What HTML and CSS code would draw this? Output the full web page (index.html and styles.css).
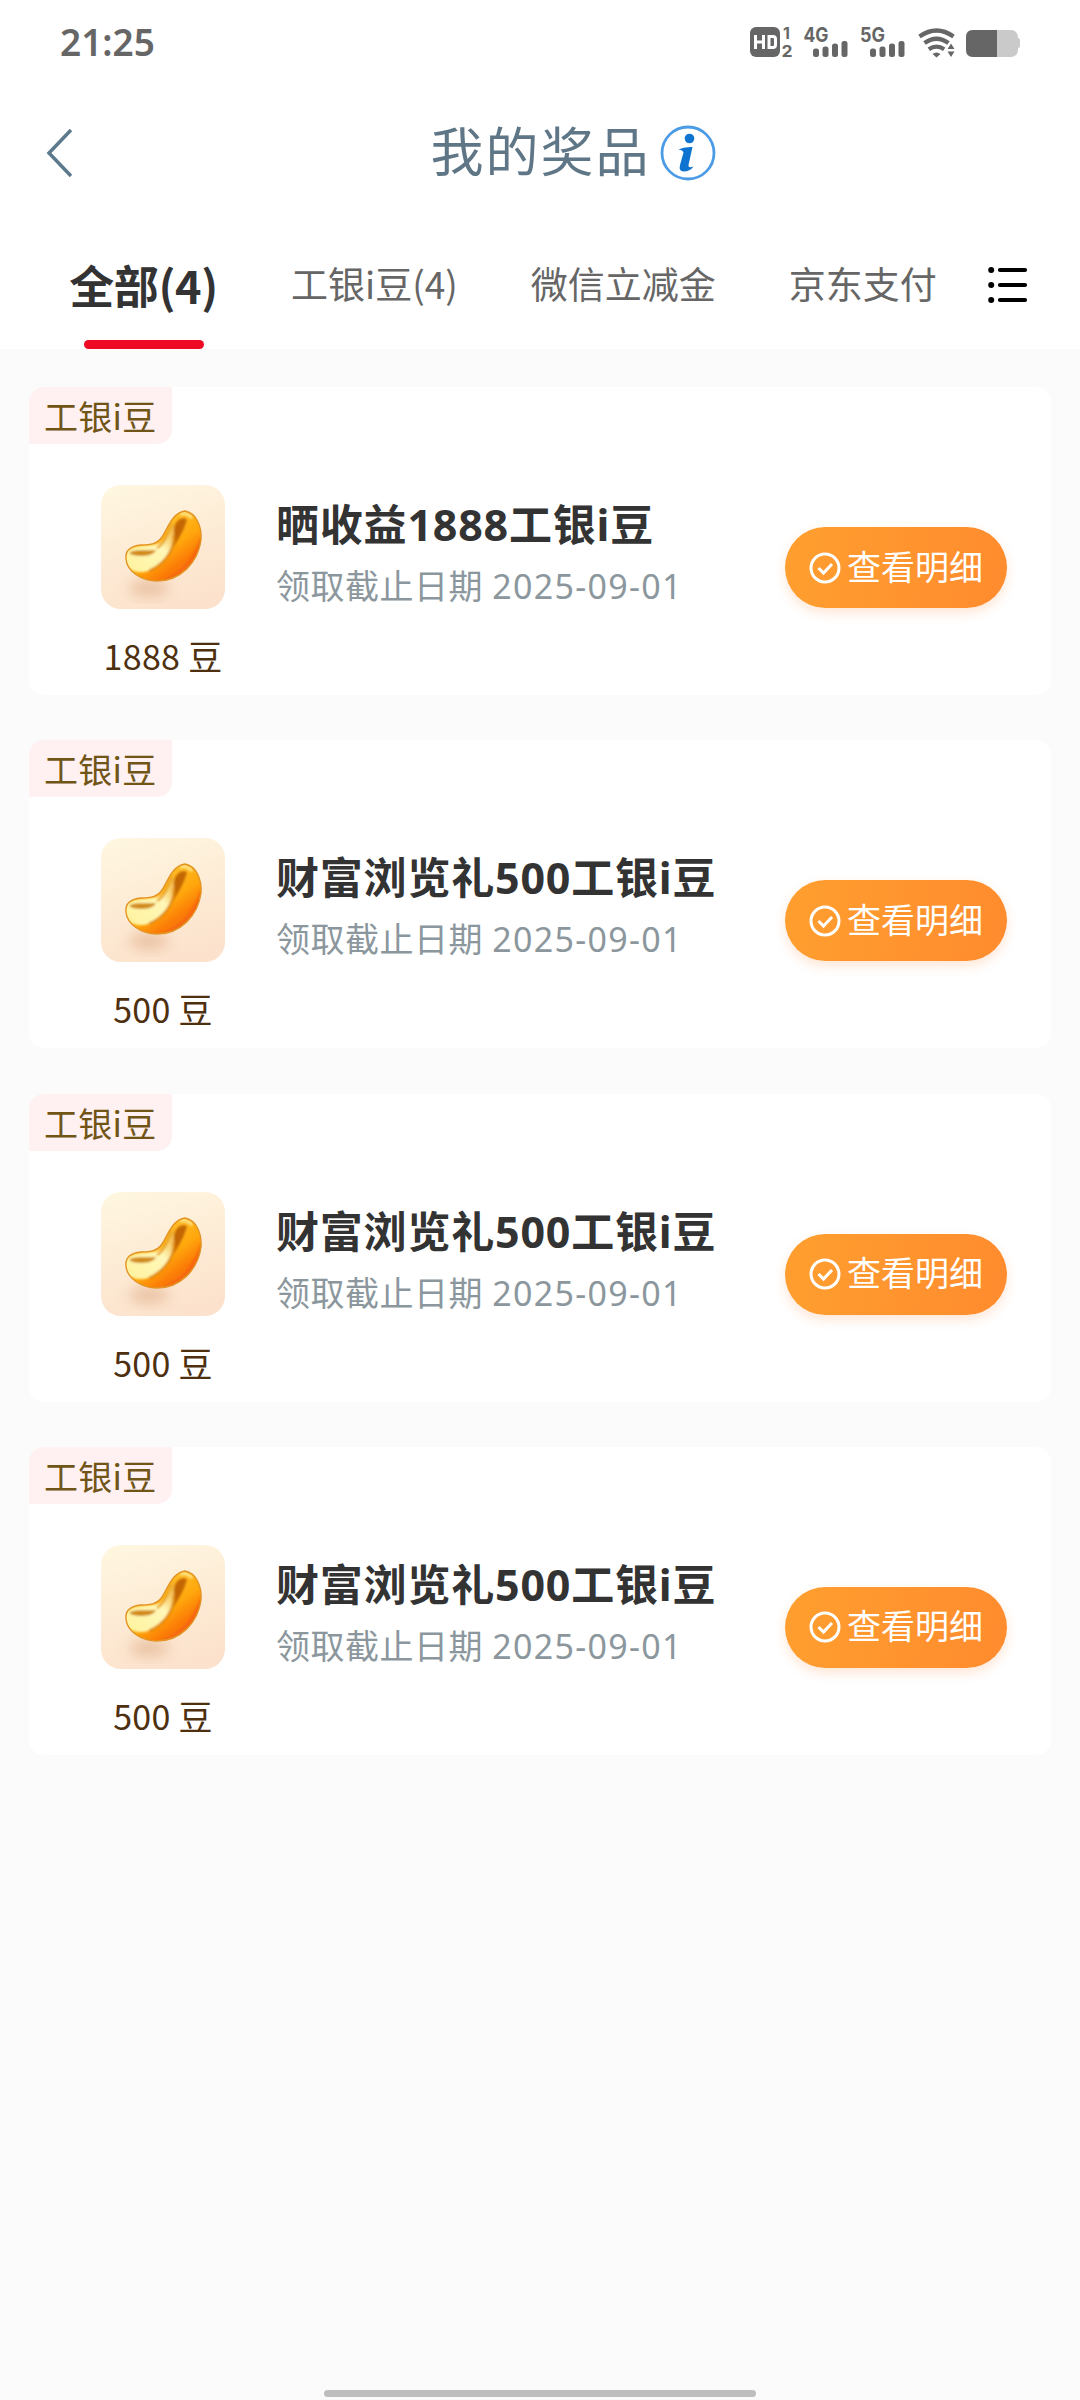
FILE: index.html
```html
<!DOCTYPE html>
<html lang="zh-CN">
<head>
<meta charset="utf-8">
<title>我的奖品</title>
<link rel="stylesheet" href="styles.css">
</head>
<body>
<svg class="defs" width="0" height="0" aria-hidden="true">
  <defs>
    <linearGradient id="tile" x1="0.3" y1="0" x2="0.6" y2="1">
      <stop offset="0" stop-color="#fff6e0"/><stop offset="0.5" stop-color="#fdebd5"/><stop offset="1" stop-color="#fce2cc"/>
    </linearGradient>
    <linearGradient id="body" x1="0.35" y1="0.2" x2="0.85" y2="0.85">
      <stop offset="0" stop-color="#ffc42e"/><stop offset="0.5" stop-color="#ffa70c"/><stop offset="0.78" stop-color="#fb7a06"/><stop offset="1" stop-color="#f39a1c"/>
    </linearGradient>
    <linearGradient id="shine" x1="0" y1="0.8" x2="1" y2="0">
      <stop offset="0" stop-color="#fff3a0"/><stop offset="0.6" stop-color="#fff7b8"/><stop offset="1" stop-color="#f0a01c"/>
    </linearGradient>
    <filter id="soft" x="-50%" y="-50%" width="200%" height="200%"><feGaussianBlur stdDeviation="7"/></filter>
    <filter id="smooth" x="-20%" y="-20%" width="140%" height="140%"><feGaussianBlur stdDeviation="1.1"/></filter>
    <clipPath id="bean-clip"><path d="M84 26C95 28 101 41 100 55C97 78 79 96 56 96C40 96 26 86 25 74C24 65 30 61 40 60C50 60 56 59 61 52C67 43 71 28 84 26Z"/></clipPath>
    <symbol id="bean" viewBox="0 0 124 124">
      <rect width="124" height="124" rx="20" fill="url(#tile)"/>
      <ellipse cx="48" cy="103" rx="20" ry="8" fill="#d59b72" opacity="0.5" filter="url(#soft)"/>
      <g clip-path="url(#bean-clip)">
        <rect x="20" y="20" width="85" height="80" fill="url(#body)"/>
        <g filter="url(#smooth)">
          <path d="M60 95C84 84 95 69 99 52L105 80L80 98Z" fill="#f55f0c" opacity="0.75"/>
          <path d="M22 72C29 57 48 63 59 58C67 50 69 42 72 36C75 50 74 66 60 79C50 89 31 90 24 80Z" fill="url(#shine)"/>
          <path d="M29 67C37 64 47 66 55 65C52 72 37 72 29 69Z" fill="#d18a15"/>
          <path d="M73 48C72 38 79 31 86 34C83 46 77 54 73 62Z" fill="#b85a06" opacity="0.85"/>
          <path d="M73 50C74 66 62 80 48 86" fill="none" stroke="#e08a10" stroke-width="2.500"/>
          <path d="M56 63C64 58 67 48 70 39" fill="none" stroke="#eba51b" stroke-width="2.500"/>
          <path d="M79 29Q86 27 91 33" fill="none" stroke="#ffe487" stroke-width="3"/>
        </g>
      </g>
      <path d="M84 26C95 28 101 41 100 55C97 78 79 96 56 96C40 96 26 86 25 74C24 65 30 61 40 60C50 60 56 59 61 52C67 43 71 28 84 26Z" fill="none" stroke="#e39424" stroke-width="1.400"/>
    </symbol>
    <symbol id="check" viewBox="0 0 32 32">
      <circle cx="16" cy="16" r="14" fill="none" stroke="#fff" stroke-width="3"/>
      <path d="M9.5 16L14.5 21L23 12" fill="none" stroke="#fff" stroke-width="3"/>
    </symbol>
  </defs>
</svg>

<header class="top">
  <div class="status">
    <span class="time">21:25</span>
    <svg class="status-icons" width="272" height="56" viewBox="749 14 272 56" fill="#666">
      <rect x="750" y="27" width="30" height="30" rx="6"/>
      <path d="M755.500 35V49M763.500 35V49M755.500 42H763.500M769 36.500H773Q775.500 36.500 775.500 39V45Q775.500 47.500 773 47.500H769Z" fill="none" stroke="#fff" stroke-width="3"/>
      <text class="sim" x="783" y="39" font-size="16">1</text>
      <text class="sim" x="781.500" y="56.500" font-size="16" textLength="11" lengthAdjust="spacingAndGlyphs">2</text>
      <text class="net" x="803.500" y="42" textLength="25" lengthAdjust="spacingAndGlyphs">4G</text>
      <text class="net" x="860" y="42" textLength="25" lengthAdjust="spacingAndGlyphs">5G</text>
      <g id="bars">
        <rect x="813" y="48.500" width="6" height="8.500" rx="2.500"/><rect x="822.500" y="46.500" width="6" height="10.500" rx="2.500"/>
        <rect x="832" y="43.500" width="6" height="13.500" rx="2.500"/><rect x="841.500" y="41" width="6" height="16" rx="2.500"/>
      </g>
      <use href="#bars" x="57"/>
      <g fill="none" stroke="#666" stroke-width="4.200">
        <path d="M919.500 36.500Q936.500 24.500 953.500 36.500"/><path d="M924.500 43Q936.500 34.500 948.500 43"/><path d="M928.800 49.200Q936.500 44 944.200 49.200"/>
      </g>
      <path d="M932.500 54Q936.500 51 940.500 54L936.500 57.500Z"/>
      <path d="M951 43.500L954.500 49H947.500ZM951 57L954.500 51.500H947.500Z"/>
      <rect x="966" y="30" width="52" height="27" rx="7" fill="#cacaca"/>
      <rect x="1015" y="38" width="5" height="10" rx="2" fill="#cacaca"/>
      <path d="M997 30H973Q966 30 966 37V50Q966 57 973 57H997Z"/>
    </svg>
  </div>
  <div class="nav">
    <svg class="back" width="28" height="50" viewBox="0 0 28 50"><path d="M25 2L3 25L25 48" fill="none" stroke="#5c7a8c" stroke-width="3.500"/></svg>
    <h1 class="title">我的奖品</h1>
    <svg class="info" width="58" height="58" viewBox="0 0 58 58">
      <circle cx="29" cy="29" r="26" fill="none" stroke="#4c9be6" stroke-width="2.800"/>
      <circle cx="30.500" cy="14.500" r="4.800" fill="#0f74d0"/>
      <path d="M19.500 25.500Q25 22.500 33.500 23L29.500 41Q29 44.500 34.500 42.500Q31 47.500 24.500 47.500Q19.500 47 21 41L24.500 28.500Q24 26 19.500 25.500Z" fill="#0f74d0"/>
    </svg>
  </div>
  <nav class="tabs">
    <span class="tab active">全部(4)</span>
    <span class="tab">工银i豆(4)</span>
    <span class="tab">微信立减金</span>
    <span class="tab">京东支付</span>
    <svg class="menu" width="40" height="38" viewBox="0 0 40 38">
      <path d="M12 4H37M12 19H37M12 34H37" stroke="#000" stroke-width="4.200" stroke-linecap="round"/>
      <circle cx="3.200" cy="4" r="3"/><circle cx="3.200" cy="19" r="3"/><circle cx="3.200" cy="34" r="3"/>
    </svg>
  </nav>
</header>

<main class="list">
  <article class="card">
    <span class="tag">工银i豆</span>
    <div class="row">
      <div class="prize"><svg width="124" height="124"><use href="#bean"/></svg><span class="amount">1888 豆</span></div>
      <div class="text"><h2 class="name">晒收益1888工银i豆</h2><p class="date">领取截止日期 <time>2025-09-01</time></p></div>
      <button class="detail"><svg width="32" height="32"><use href="#check"/></svg><span class="label">查看明细</span></button>
    </div>
  </article>
  <article class="card">
    <span class="tag">工银i豆</span>
    <div class="row">
      <div class="prize"><svg width="124" height="124"><use href="#bean"/></svg><span class="amount">500 豆</span></div>
      <div class="text"><h2 class="name">财富浏览礼500工银i豆</h2><p class="date">领取截止日期 <time>2025-09-01</time></p></div>
      <button class="detail"><svg width="32" height="32"><use href="#check"/></svg><span class="label">查看明细</span></button>
    </div>
  </article>
  <article class="card">
    <span class="tag">工银i豆</span>
    <div class="row">
      <div class="prize"><svg width="124" height="124"><use href="#bean"/></svg><span class="amount">500 豆</span></div>
      <div class="text"><h2 class="name">财富浏览礼500工银i豆</h2><p class="date">领取截止日期 <time>2025-09-01</time></p></div>
      <button class="detail"><svg width="32" height="32"><use href="#check"/></svg><span class="label">查看明细</span></button>
    </div>
  </article>
  <article class="card">
    <span class="tag">工银i豆</span>
    <div class="row">
      <div class="prize"><svg width="124" height="124"><use href="#bean"/></svg><span class="amount">500 豆</span></div>
      <div class="text"><h2 class="name">财富浏览礼500工银i豆</h2><p class="date">领取截止日期 <time>2025-09-01</time></p></div>
      <button class="detail"><svg width="32" height="32"><use href="#check"/></svg><span class="label">查看明细</span></button>
    </div>
  </article>
</main>
<footer class="home"></footer>
</body>
</html>
```
FILE: styles.css
```css
* { box-sizing: border-box; }

body {
  display: flex;
  flex-direction: column;
  width: 1080px;
  height: 2400px;
  margin: 0;
  background: #fbfbfb;
  font-family: "Noto Sans CJK SC", sans-serif;
}

h1, h2, p { margin: 0; font-weight: 400; }
svg { display: block; flex: none; }
.defs { position: absolute; }

.top { height: 349px; background: #fff; }

.status {
  display: flex;
  justify-content: space-between;
  height: 84px;
  padding: 0 59px 0 60px;
}
.time {
  padding-top: 18px;
  font: 600 37px/48px "Noto Sans", sans-serif;
  color: #666;
}
.status-icons { margin-top: 14px; }
.sim { font-family: Inter, sans-serif; font-weight: 700; }
.net { font-family: Inter, sans-serif; font-size: 20px; font-weight: 700; }

.nav {
  display: flex;
  align-items: center;
  height: 138px;
  padding-left: 46px;
}
.back { margin-right: 356.500px; }
.title {
  margin-top: -8px;
  font-size: 53px;
  line-height: 60px;
  letter-spacing: 2px;
  color: #5f7686;
}
.info { margin-left: 8.500px; }

.tabs {
  display: flex;
  height: 127px;
  padding-left: 69px;
}
.tab {
  margin-right: 73px;
  padding-top: 36px;
  font-size: 37px;
  line-height: 50px;
  color: #666;
  white-space: nowrap;
}
.tab.active {
  display: flex;
  flex-direction: column;
  align-items: center;
  width: 149px;
  padding-top: 35px;
  font-size: 45px;
  font-weight: 700;
  line-height: 56px;
  letter-spacing: -0.400px;
  color: #333;
}
.tab.active::after {
  content: "";
  width: 120px;
  height: 9px;
  margin-top: 27px;
  border-radius: 5px;
  background: #ee0a24;
}
.menu { margin: 44px 0 0 -22px; }

.list {
  display: flex;
  flex: 1;
  flex-direction: column;
  gap: 45.300px;
  padding: 38px 29px 0;
}
.card {
  height: 308px;
  border-radius: 15px;
  background: #fff;
}
.tag {
  display: block;
  width: 143px;
  height: 57px;
  padding-left: 15px;
  border-radius: 15px 0;
  background: #fff0f1;
  font-size: 34px;
  line-height: 57px;
  letter-spacing: 0.300px;
  color: #705517;
}
.row {
  display: flex;
  padding: 41px 44px 0 72px;
}
.prize {
  display: flex;
  flex-direction: column;
  align-items: center;
  width: 124px;
}
.amount {
  margin-top: 22px;
  font-size: 34px;
  line-height: 50px;
  letter-spacing: 0.300px;
  color: #4e300f;
  white-space: nowrap;
}
.text { width: 560px; padding-left: 51px; white-space: nowrap; }
.name {
  margin-top: 10px;
  font: 700 43px/60px "Noto Sans", "Noto Sans CJK SC", sans-serif;
  letter-spacing: 0.800px;
  color: #333;
}
.date {
  margin-top: 6px;
  font: 400 34px/50px "Noto Sans", "Noto Sans CJK SC", sans-serif;
  letter-spacing: 0.500px;
  color: #8b979d;
}
.date time { letter-spacing: 1.300px; }
.detail {
  display: flex;
  align-items: center;
  width: 222px;
  height: 81px;
  margin-top: 42px;
  padding: 0 0 0 24px;
  border: 0;
  border-radius: 41px;
  background: linear-gradient(100deg, #ff9f2f, #ff8b2e);
  box-shadow: 0 5px 12px rgba(255, 130, 50, 0.200);
  font: 400 34px/50px "Noto Sans CJK SC", sans-serif;
  color: #fff;
  gap: 6px;
}
.label { margin-top: -4px; }

.home {
  align-self: center;
  width: 432px;
  height: 7px;
  margin-bottom: 3px;
  border-radius: 4px;
  background: #bebebe;
}
```
